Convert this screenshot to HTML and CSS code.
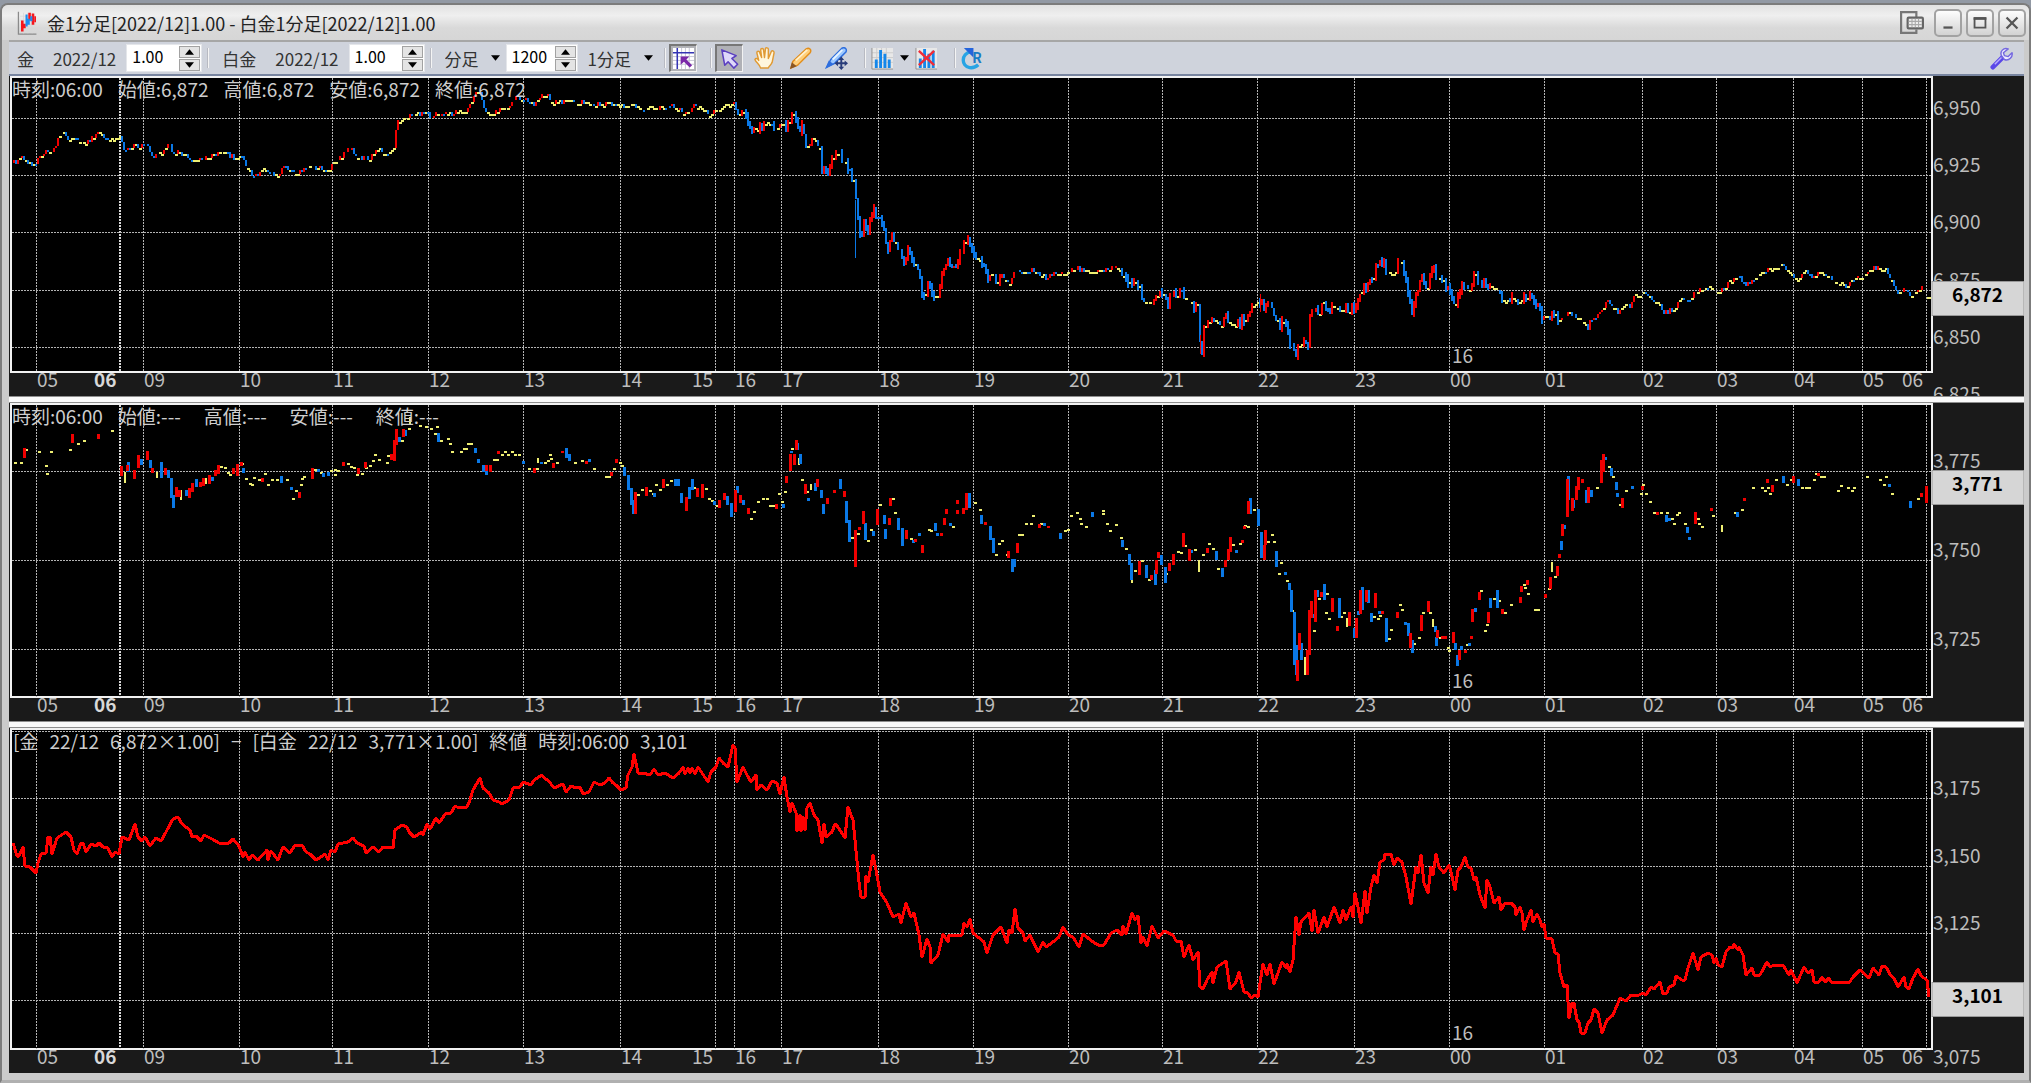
FILE: index.html
```html
<!DOCTYPE html>
<html lang="ja">
<head>
    <meta charset="UTF-8">
    <meta name="viewport" content="width=device-width, initial-scale=1.0">
    <title>金1分足[2022/12]1.00 - 白金1分足[2022/12]1.00</title>
    <link rel="stylesheet" href="styles.css">
</head>
<body>
    <div class="window">
        <header class="titlebar">
            <svg class="app-icon" viewBox="0 0 22 28">
                <path d="M1 1v26h21" fill="none" stroke="#8a8a8a" stroke-width="1.5"/>
                <path d="M3 6h18M3 11h18M3 16h18M3 21h18M7 2v24M12 2v24M17 2v24" stroke="#d8d8d8"/>
                <path d="M5.500 11v13M8 15v5M14 2v9M18 3v13" stroke="#f5151c" stroke-width="3"/>
                <path d="M10.500 4v14M13 9v7M16 6v6" stroke="#1c8cf0" stroke-width="2.500"/>
                <path d="M20.500 6v7" stroke="#f5151c" stroke-width="2"/>
            </svg>
            <h1>金1分足[2022/12]1.00 - 白金1分足[2022/12]1.00</h1>
            <div class="window-buttons">
                <button class="float-button" aria-label="分離">
                    <svg viewBox="0 0 22 22"><path d="M15 6V1H1v19h14v-3" fill="none" stroke="#777" stroke-width="2"/><rect x="7" y="6" width="14" height="10" rx="1" fill="#eee" stroke="#666" stroke-width="2"/><path d="M8 9.500h12M8 12.500h12M11 7v8M14 7v8M17 7v8" stroke="#aaa"/></svg>
                </button>
                <button aria-label="最小化"><svg viewBox="0 0 22 22"><path d="M6 16h10" stroke="#555" stroke-width="2.500"/></svg></button>
                <button aria-label="最大化"><svg viewBox="0 0 22 22"><path d="M5 6h12v10H5z" fill="none" stroke="#555" stroke-width="2"/><path d="M4 6h14" stroke="#555" stroke-width="3"/></svg></button>
                <button aria-label="閉じる"><svg viewBox="0 0 22 22"><path d="M5 5l12 12M17 5L5 17" stroke="#555" stroke-width="2.500"/></svg></button>
            </div>
        </header>

        <div class="toolbar">
            <label class="name" for="gold">金</label>
            <span class="date">2022/12</span>
            <span class="spin">
                <input id="gold" type="text" value="1.00">
                <span class="steps">
                    <button aria-label="増"><svg viewBox="0 0 10 6"><path d="M5 0l5 6H0z"/></svg></button>
                    <button aria-label="減"><svg viewBox="0 0 10 6"><path d="M0 0h10L5 6z"/></svg></button>
                </span>
            </span>
            <i class="sep"></i>
            <label class="name" for="platinum">白金</label>
            <span class="date">2022/12</span>
            <span class="spin">
                <input id="platinum" type="text" value="1.00">
                <span class="steps">
                    <button aria-label="増"><svg viewBox="0 0 10 6"><path d="M5 0l5 6H0z"/></svg></button>
                    <button aria-label="減"><svg viewBox="0 0 10 6"><path d="M0 0h10L5 6z"/></svg></button>
                </span>
            </span>
            <i class="sep"></i>
            <span class="dropdown">
                <select aria-label="足種"><option>分足</option></select>
                <svg viewBox="0 0 10 6"><path d="M0 0h10L5 6z"/></svg>
            </span>
            <span class="spin count">
                <input type="text" value="1200" aria-label="本数">
                <span class="steps">
                    <button aria-label="増"><svg viewBox="0 0 10 6"><path d="M5 0l5 6H0z"/></svg></button>
                    <button aria-label="減"><svg viewBox="0 0 10 6"><path d="M0 0h10L5 6z"/></svg></button>
                </span>
            </span>
            <span class="dropdown">
                <select aria-label="間隔"><option>1分足</option></select>
                <svg viewBox="0 0 10 6"><path d="M0 0h10L5 6z"/></svg>
            </span>
            <i class="sep"></i>
            <button class="tool pressed" aria-label="十字カーソル">
                <svg viewBox="0 0 24 24"><rect x="1" y="1" width="22" height="22" fill="#fff"/><path d="M1 10h22M1 14h22M1 18h22M10 1v22M14 1v22M18 1v22" stroke="#c4c4d4"/><path d="M1 6h22M5.500 1v22" stroke="#3434b4" stroke-width="1.600"/><path d="M9 10h9l-3 3 6 6-2.500 2.500-6-6-3.500 3z" fill="#7a28a8"/></svg>
            </button>
            <i class="sep"></i>
            <button class="tool pressed" aria-label="選択">
                <svg viewBox="0 0 24 24"><path d="M4 3l15 6-4.500 3 6 6-4 4-6-6.500L7 19z" fill="#ded8fa" stroke="#5a3fc0" stroke-width="1.600" stroke-linejoin="round"/></svg>
            </button>
            <button class="tool" aria-label="移動">
                <svg viewBox="0 0 24 24"><path d="M8 22c-1-4-5-6-6-9 1-2 3-1 4 1L4 6c0-2 3-2 3 0l2 5-1-8c0-2 3-2 3 0l1 8 1-9c0-2 3-1 3 0v10l3-7c1-2 3-1 3 1l-2 10c-1 3-3 3-4 6z" fill="#fff6dc" stroke="#e09a34" stroke-width="1.500" stroke-linejoin="round"/></svg>
            </button>
            <button class="tool" aria-label="描画">
                <svg viewBox="0 0 24 24"><path d="M2 22l2-7L18 2c3-2 6 1 4 4L9 19z" fill="#ffcf7a" stroke="#e28e1c" stroke-width="1.500"/><path d="M7 14L19 3" stroke="#fff0cc" stroke-width="2"/><path d="M1 23l2-7 5 4z" fill="#8a5624"/></svg>
            </button>
            <button class="tool" aria-label="描画編集">
                <svg viewBox="0 0 24 24"><path d="M2 21l4-8L18 1c3-1 5 1 4 4L10 17z" fill="#9cc8ff" stroke="#2e6ede" stroke-width="1.500"/><path d="M8 13L18 3" stroke="#e8f4ff" stroke-width="2"/><path d="M0 23l4-9 5 4z" fill="#2e6ede"/><path d="M17 10l3 3.500h-2v2.500h2.500v-2L24 17l-3.500 3v-2H18v2.500h2L17 24l-3-3.500h2V18h-2.500v2L10 17l3.500-3v2H16v-2.500h-2z" fill="#283c7a"/></svg>
            </button>
            <i class="sep"></i>
            <button class="tool joined" aria-label="指標">
                <svg viewBox="0 0 24 24"><rect x="1" y="1" width="22" height="22" fill="#e8e8e8"/><path d="M6 1v21M11 1v21M16 1v21M1 6h22M1 11h22M1 16h22" stroke="#ccc"/><path d="M5.500 22V13M10 22V3M14.500 22V7M19 22v-9" stroke="#1487ea" stroke-width="3"/><path d="M1 1v22h22" fill="none" stroke="#909090"/></svg>
            </button>
            <button class="more" aria-label="指標一覧"><svg viewBox="0 0 10 6"><path d="M0 0h10L5 6z"/></svg></button>
            <button class="tool" aria-label="指標削除">
                <svg viewBox="0 0 24 24"><rect x="1" y="1" width="22" height="22" fill="#e8e8e8"/><path d="M5.500 22V12M10 22V2M14.500 22V7M19 22V4" stroke="#1487ea" stroke-width="3"/><path d="M1 1v22h22" fill="none" stroke="#909090"/><path d="M4 4l16 15M20 4L4 19" stroke="#f02c38" stroke-width="2.500"/></svg>
            </button>
            <i class="sep"></i>
            <button class="tool" aria-label="再読込">
                <svg viewBox="0 0 24 24"><path d="M10 5C0 7 0 20 9 21.500c4 .5 7-1 9-3" fill="none" stroke="#28a4e4" stroke-width="3.500"/><path d="M3 1h10v10z" fill="#2464dc"/><text class="r-mark" x="12" y="17">R</text></svg>
            </button>
            <button class="tool settings" aria-label="設定">
                <svg viewBox="0 0 24 24"><path d="M3 21L13 11" stroke="#5a48e8" stroke-width="5" stroke-linecap="round"/><path d="M5 18l7-7" stroke="#b8acff" stroke-width="1.500"/><path d="M19 2c-5-2-9 3-7 7l3 4c5 2 9-3 8-7l-4 4-4-1-1-3z" fill="#eeeaff" stroke="#7468e0" stroke-width="1.500" stroke-linejoin="round"/></svg>
            </button>
        </div>

        <main class="charts">
            <section class="chart gold">
                <svg class="plot" id="plot-gold"></svg>
                <p class="legend"><span>時刻:06:00</span><span>始値:6,872</span><span>高値:6,872</span><span>安値:6,872</span><span>終値:6,872</span></p>
            </section>
            <div class="splitter"></div>
            <section class="chart platinum">
                <svg class="plot" id="plot-platinum"></svg>
                <p class="legend"><span>時刻:06:00</span><span>始値:---</span><span>高値:---</span><span>安値:---</span><span>終値:---</span></p>
            </section>
            <div class="splitter"></div>
            <section class="chart spread">
                <svg class="plot" id="plot-spread"></svg>
                <p class="legend"><span>[金</span><span>22/12</span><span>6,872×1.00]</span><span>−</span><span>[白金</span><span>22/12</span><span>3,771×1.00]</span><span>終値</span><span>時刻:06:00</span><span>3,101</span></p>
            </section>
        </main>
    </div>

    <script src="charts.js"></script>
</body>
</html>
```
FILE: styles.css
```css
* {
    box-sizing: border-box;
}

body {
    margin: 0;
    padding-top: 3px;
    height: 100vh;
    overflow: hidden;
    background: #9299a4;
    font-family: "Noto Sans CJK JP", sans-serif;
    font-size: 17px;
    color: #333;
}

button, input, select {
    font: inherit;
    color: inherit;
    margin: 0;
    padding: 0;
    border: none;
    background: none;
}

.window {
    display: flex;
    flex-direction: column;
    height: 100%;
    padding: 0 5px 7px 7px;
    border: 2px solid #7c7c7c;
    border-width: 2px 2px 3px 2px;
    border-bottom-color: #b0b0b0;
    border-radius: 8px 8px 0 0;
    background: #cbcbcb;
}

/* title */
.titlebar {
    display: flex;
    align-items: center;
    height: 35px;
    margin: 0 -5px 0 -7px;
    padding: 0 3px 0 14px;
    border-radius: 6px 6px 0 0;
    background: linear-gradient(#e2e2e2, #efefef 30%, #d9d9d9 65%, #d6d6d6);
}

.app-icon {
    width: 22px;
    height: 24px;
}

h1 {
    flex: 1;
    margin: 0 0 0 9px;
    font-size: 18px;
    font-weight: normal;
    line-height: 24px;
    color: #222;
}

.window-buttons {
    display: flex;
    gap: 4px;
}

.window-buttons button {
    width: 28px;
    height: 28px;
    padding: 2px;
    border: 2px solid #a2a2a2;
    border-radius: 5px;
    background: linear-gradient(#fdfdfd, #d2d2d2);
}

.window-buttons .float-button {
    margin-right: 4px;
    border: none;
    background: none;
}

.window-buttons svg {
    display: block;
    width: 100%;
}

/* toolbar */
.toolbar {
    display: flex;
    align-items: center;
    height: 36px;
    flex: none;
    padding-right: 9px;
    border-top: 2px solid #a6a6a6;
    border-bottom: 2px solid #7885a0;
    background: #cfd3dc;
}

.name {
    margin: 0 19px 0 10px;
}

.name:first-child {
    margin-left: 8px;
}

.date {
    margin-right: 10px;
}

.spin {
    display: flex;
    align-items: center;
    width: 76px;
    height: 28px;
    padding: 0 1px 0 5px;
    background: #fff;
    border: 1px solid #e4e6ea;
}

.spin input {
    flex: 1;
    min-width: 0;
    height: 24px;
    padding-bottom: 4px;
    font-size: 16px;
    color: #000;
}

.count {
    width: 72px;
}

.steps {
    display: flex;
    flex-direction: column;
    gap: 1px;
    width: 21px;
}

.steps button {
    display: flex;
    align-items: center;
    justify-content: center;
    height: 12px;
    border: 1px solid #a2a2a2;
    background: #e4e4e4;
}

.steps svg, .more svg, .dropdown svg {
    width: 9px;
    height: 6px;
}

.sep {
    width: 2px;
    height: 20px;
    margin: 0 3px 0 5px;
    background: #f4f4f4;
    border-left: 1px solid #b8bac2;
}

.dropdown {
    display: flex;
    align-items: center;
    margin: 0 6px 0 10px;
}

.dropdown select {
    appearance: none;
    padding-right: 22px;
}

.dropdown svg {
    margin-left: -10px;
    pointer-events: none;
}

.tool {
    display: flex;
    align-items: center;
    justify-content: center;
    width: 28px;
    height: 28px;
    margin-right: 8px;
}

.tool svg {
    width: 23px;
    height: 23px;
}

.pressed {
    border: 1px solid #f2f2f2;
    border-top: 2px solid #777;
    border-left: 2px solid #777;
    background: #b0b1b6;
}

.joined {
    margin-right: 0;
}

.more {
    width: 16px;
    height: 28px;
}

.more svg {
    display: block;
    margin: 0 auto;
}

.settings {
    margin: 0 0 0 auto;
}

.r-mark {
    font-family: Roboto, sans-serif;
    font-size: 15px;
    font-weight: bold;
    fill: #1a7cc4;
}

/* charts */
.charts {
    display: flex;
    flex-direction: column;
    flex: 1;
    min-height: 0;
}

.chart {
    position: relative;
    min-height: 0;
    background: #1a1a1a;
}

.gold {
    flex: 320 0 0;
}

.platinum {
    flex: 318 0 0;
}

.spread {
    flex: 345 0 0;
}

.splitter {
    height: 7px;
    background: #fafafa;
    border-top: 1px solid #8e8e8e;
    border-bottom: 1px solid #8e8e8e;
}

.plot {
    display: block;
    width: 100%;
    height: 100%;
    overflow: hidden;
}

.legend {
    position: absolute;
    top: 2px;
    left: 3px;
    display: flex;
    gap: 15px;
    margin: 0;
    font-size: 19px;
    line-height: 22px;
    color: #cdcdcd;
    white-space: nowrap;
}

.platinum .legend span {
    min-width: 71px;
}

.spread .legend {
    left: 4px;
    gap: 11px;
}

.frame {
    fill: #000;
    stroke: #f2f2f2;
    stroke-width: 2;
    shape-rendering: crispEdges;
}

.grid {
    stroke: #b4b4b4;
    stroke-dasharray: 2 1;
    shape-rendering: crispEdges;
}

.grid.session {
    stroke: #d8d8d8;
    stroke-width: 2;
}

.axis {
    font-size: 19px;
    fill: #bdbdbd;
}

.axis.session {
    font-weight: bold;
    fill: #d8d8d8;
}

.up {
    fill: #f00000;
}

.down {
    fill: #0a78e6;
}

.flat {
    fill: #eeee72;
}

.bars {
    shape-rendering: crispEdges;
}

.line {
    fill: none;
    stroke: #f00;
    stroke-width: 3;
    stroke-linejoin: round;
    shape-rendering: crispEdges;
}

.tag {
    fill: #d6d6d6;
    stroke: #999;
}

.tag-text {
    font-size: 19px;
    font-weight: bold;
    fill: #000;
}
```
FILE: charts.js
```js
const NS = 'http://www.w3.org/2000/svg';

// base size of a panel, everything is scaled from this
const BASE_LEFT = 9;
const BASE_WIDTH = 2015;
const PLOT_RIGHT = 1932;

// [grid x, label, label x]
const hours = [
    [37, '05'], [120, '06', 94], [144, '09'], [240, '10'], [333, '11'], [429, '12'], [524, '13'], [621, '14'],
    [716, '15', 692], [735, '16'], [782, '17'], [879, '18'], [974, '19'], [1069, '20'], [1163, '21'], [1258, '22'],
    [1355, '23'], [1450, '00'], [1545, '01'], [1643, '02'], [1717, '03'], [1794, '04'], [1863, '05'], [1927, '06', 1902]
];

const goldTrace = `13,163 22,157 26,161 33,166 37,159 45,150 51,153 57,140 62,134 69,139 78,140 85,143 91,138 98,133 107,137 112,140 119,135
122,148 126,151 135,145 138,148 145,146 153,156 161,152 168,143 172,151 181,153 192,163 201,159 210,156 225,152 232,157 241,157 246,168
254,176 263,168 276,176 283,167 290,170 296,175 304,167 312,168 328,170 333,164 344,152 350,148 357,157 370,158 376,150 386,153 393,147
396,120 400,122 408,115 417,115 424,112 431,117 435,110 440,116 446,111 452,116 455,109 464,112 470,103 475,91 479,93 484,110 489,115
498,110 507,107 513,98 525,99 533,105 541,93 551,100 556,103 568,100 580,103 600,104 621,104 627,108 629,103 638,107 643,110 658,108
670,105 679,109 685,114 693,104 702,109 709,115 717,110 725,105 733,101 736,117 745,113 751,132 756,128 765,125 774,128 782,128 789,120
792,112 796,122 799,135 801,123 805,150 811,138 819,145 821,168 826,175 830,162 836,153 842,158 847,168 853,183 855,197 856,217 860,240
863,220 866,234 872,207 875,217 881,222 887,250 892,233 899,252 902,265 906,250 910,255 917,270 920,283 922,305 927,282 932,295 937,293
941,278 948,260 951,270 959,255 967,238 972,252 980,262 987,280 990,275 996,284 1001,275 1009,285 1014,270 1024,273 1033,270 1046,278
1055,273 1068,273 1073,267 1082,270 1095,271 1117,268 1126,283 1135,282 1142,297 1149,305 1158,293 1167,302 1171,293 1180,292 1189,296
1193,308 1197,305 1199,340 1201,351 1202,333 1210,318 1220,327 1225,317 1231,327 1242,320 1248,313 1250,305 1254,308 1260,298 1264,315
1266,300 1271,308 1278,327 1284,318 1288,340 1294,355 1300,340 1307,347 1309,315 1314,308 1318,315 1323,300 1327,313 1333,303 1341,309
1354,309 1357,299 1362,287 1364,292 1373,277 1375,265 1382,260 1386,273 1394,275 1399,257 1406,287 1411,313 1415,293 1421,275 1426,290
1430,265 1435,277 1438,272 1444,285 1448,287 1451,302 1455,303 1461,285 1470,288 1474,275 1481,283 1488,288 1496,290 1503,300 1514,295
1516,303 1523,298 1530,293 1536,305 1541,318 1549,317 1551,308 1558,325 1567,312 1578,318 1587,328 1589,320 1600,313 1606,299 1617,312
1629,305 1633,298 1644,293 1654,301 1664,312 1673,310 1680,298 1688,302 1696,290 1710,285 1719,292 1728,283 1737,275 1745,285 1756,278
1765,270 1781,266 1787,272 1796,279 1804,272 1812,278 1820,273 1829,277 1845,287 1856,277 1864,277 1873,267 1886,269 1896,293 1904,288
1911,297 1917,288 1926,284`;

// single bars: x,top,bottom
const platinumUp = `24,448,458 72,434,443 98,434,439 121,466,476 127,465,471 134,470,479 138,455,468 147,451,460 152,468,473 165,468,475
176,487,497 179,490,497 189,488,498 192,483,492 200,482,487 203,478,486 209,475,484 215,470,476 218,465,474 233,468,474 237,464,476 241,462,466
262,478,482 299,492,498 312,468,479 343,462,466 358,468,474 365,462,468 391,454,460 394,440,461 396,429,445 403,429,437 486,465,471 490,465,472
498,451,454 534,468,473 553,463,468 562,451,453 586,461,464 611,472,476 616,459,463 635,492,514 646,487,496 663,479,488 686,497,511 697,488,497
702,484,498 719,500,508 724,493,500 735,490,512 740,495,503 748,508,514 776,504,509 786,476,483 790,454,471 794,454,465 796,440,450 805,484,494
817,479,487 827,498,504 834,490,493 844,491,497 855,530,567 859,527,530 863,511,524 877,509,525 889,518,525 890,498,506 906,530,539 915,539,542
922,545,553 941,533,536 944,518,525 946,509,514 957,500,504 957,510,514 963,508,514 966,493,510 985,522,525 1008,551,558 1017,543,553 1039,524,528
1048,526,528 1139,561,575 1151,575,580 1156,560,574 1158,552,558 1169,563,571 1173,554,565 1183,533,547 1189,549,561 1207,548,553 1225,560,567
1228,549,560 1230,537,552 1242,540,543 1244,526,529 1248,501,514 1264,545,560 1265,530,545 1297,660,681 1299,633,650 1307,650,675 1309,610,655
1311,601,618 1315,590,622 1321,592,597 1332,598,612 1337,626,631 1349,612,626 1356,618,638 1360,590,614 1366,590,602 1375,593,608 1382,611,614
1397,612,618 1410,633,648 1421,615,631 1428,601,612 1437,630,638 1442,636,639 1445,636,639 1453,632,643 1459,650,660 1465,650,653 1471,636,639
1472,609,622 1479,592,600 1488,612,623 1502,609,614 1520,597,603 1521,586,592 1527,580,585 1545,594,598 1550,577,589 1557,566,576 1559,554,558
1562,524,536 1567,479,517 1572,498,511 1576,486,500 1578,477,490 1582,479,483 1588,487,503 1601,460,483 1603,454,472 1622,498,508 1642,486,490
1657,512,515 1695,512,524 1711,508,511 1744,498,501 1767,479,483 1772,485,492 1793,476,483 1818,473,476 1921,493,497 1926,486,503`;

const platinumDown = `128,462,472 141,459,465 150,460,468 161,462,478 168,470,478 171,478,498 173,495,508 186,490,496 196,479,487 212,477,481
243,468,473 281,476,483 291,487,490 318,469,472 323,473,477 328,472,476 399,437,442 405,430,436 438,433,442 475,448,453 478,459,463 483,465,472
486,471,475 523,461,464 541,462,464 566,448,458 569,454,461 589,459,462 624,467,476 628,475,490 631,488,505 633,500,514 654,493,497 675,479,486
678,479,486 681,493,503 689,487,499 692,479,490 714,501,505 727,496,505 731,503,517 737,486,493 743,500,505 783,504,508 791,451,453 797,443,450
800,454,464 808,498,501 815,483,491 821,490,498 823,504,514 840,479,489 846,501,523 849,520,542 865,523,540 873,531,536 884,515,524 885,529,539
898,518,530 902,528,546 913,540,543 919,533,536 935,523,531 937,533,536 950,523,526 969,493,508 981,515,524 990,526,540 993,538,553 1012,559,572
1014,559,567 1044,523,526 1060,533,539 1092,512,517 1122,540,547 1129,554,565 1131,563,580 1146,565,578 1155,570,585 1161,555,565 1165,567,583
1191,550,553 1216,551,560 1222,568,577 1236,550,553 1250,498,514 1258,509,526 1261,532,558 1276,551,567 1285,572,575 1289,583,590 1291,590,612
1294,612,665 1296,645,675 1301,643,660 1312,614,618 1317,590,597 1324,584,600 1339,598,618 1354,628,638 1358,611,615 1362,587,610 1368,590,603
1371,613,622 1379,611,614 1386,618,642 1405,622,625 1408,623,636 1412,640,653 1435,626,632 1436,637,646 1455,643,650 1457,655,666 1461,646,650
1469,643,646 1475,608,612 1490,598,608 1497,590,608 1561,541,550 1564,525,529 1568,476,500 1573,500,508 1586,490,503 1591,490,497 1605,457,460
1611,468,476 1616,482,490 1617,493,497 1632,486,489 1666,515,522 1669,518,521 1687,527,533 1689,537,540 1737,512,517 1783,476,483 1798,479,486
1889,484,487 1910,501,508`;

const platinumFlat = `15,462 21,462 26,449 39,451 51,451 46,465 47,473 70,449 78,443 84,440 112,430 125,472,483 157,472,478 181,490,500 206,478,484
221,466 225,467 228,472 230,474 242,463 246,478 250,483 252,484 254,477 259,479 265,473 268,484 272,479 277,479 287,479 293,498 296,490 301,484
302,478 304,476 315,469 321,472 331,470 335,469 335,474 338,470 348,463 351,466 354,467 357,474 362,473 366,467 370,465 373,460 375,454 379,459
387,462 388,455 402,440 410,417,425 409,428 420,425 426,426 431,428 435,433 437,426 441,440 448,438 450,443 452,451 461,451 464,448 466,448
468,443 471,443 494,459 497,459 502,454 505,451 508,454 512,451 515,454 519,454 529,468 537,468 538,458,463 545,462 548,460 550,454 551,458
557,462 575,462 582,460 594,468 606,476 609,476 614,468 620,462 622,465 638,494 642,489 650,490 653,493 656,484 660,489 667,484 671,480 694,487
706,488 709,498 712,500 717,505 751,518 754,511 758,501 763,498 767,498 770,505 773,505 782,501 779,493 785,491 792,448 799,458,465 802,479
807,491 811,484,490 852,537 858,533 868,540 871,529 880,504 893,498 895,512 911,538 919,534 929,529 931,530 953,526 975,502 980,509 996,554
999,543 1002,540 1007,554 1019,534 1022,534 1026,523 1031,523 1033,515 1041,523 1065,530 1068,529 1071,515 1077,512 1080,518 1081,523 1086,526
1103,510 1103,513 1107,523 1110,530 1116,524 1121,537 1126,548 1132,573,583 1135,570 1142,560 1149,579 1166,573 1178,551 1181,552 1185,545
1195,549 1199,560,572 1203,554 1209,543 1213,548 1218,568 1233,544 1240,543 1245,525 1248,526 1254,509 1268,541 1272,534 1274,541 1279,573
1281,562 1287,580 1292,610 1305,657,675 1314,630 1319,598 1327,593 1326,612 1329,618 1341,616 1344,612 1347,618,627 1374,616 1378,618 1380,615
1389,638 1391,629 1400,604 1402,609 1414,643 1419,637 1423,612 1430,612 1433,619,627 1440,637 1449,650 1448,647 1467,644 1481,590 1485,630
1487,624 1494,598 1499,600 1505,612 1511,604 1524,584 1525,587 1528,593 1535,609 1538,609 1549,588 1552,562,572 1555,576 1597,487 1609,466
1613,476 1620,504 1626,490 1643,484 1641,493 1646,493 1650,501 1654,512 1661,512 1667,512 1672,518 1674,523 1677,514 1679,512 1685,523 1698,518
1699,523 1702,526 1713,515 1722,525,532 1735,512 1742,509 1753,487 1762,487 1765,490 1768,487 1770,493 1776,479 1787,484 1791,479 1802,487
1806,487 1809,487 1814,479 1816,473 1821,476 1824,476 1838,490 1841,485 1848,487 1852,490 1854,487 1867,476 1880,479 1886,476 1884,484 1892,493 1918,498`;

const spreadLine = `13,843 17,856 19,856 23,847 25,866 30,867 36,873 38,863 41,854 46,853 48,837 50,837 52,854 57,838 66,832 71,837 74,850 77,854
81,843 83,843 86,852 91,844 96,846 99,843 103,847 108,848 112,857 115,852 119,854 122,837 129,840 135,824 138,837 142,841 145,837 150,846
156,838 161,841 166,832 173,819 178,817 182,824 190,830 192,837 196,836 201,841 204,835 212,839 219,843 229,843 233,839 239,846 243,857 245,852
249,860 252,855 258,860 267,850 268,860 271,851 278,860 283,847 290,853 295,845 302,845 306,852 310,854 316,860 321,857 325,854 328,860 331,850
335,852 338,844 348,842 353,838 357,843 364,846 366,853 373,847 379,852 383,847 393,848 395,830 402,825 407,827 409,832 414,837 422,832 423,835
427,824 430,829 436,818 439,823 446,813 451,813 455,806 459,808 467,807 470,800 473,790 480,778 483,788 489,793 493,800 499,802 502,804 509,800
513,788 520,787 523,782 531,785 534,780 542,775 545,779 548,780 554,788 563,784 566,792 571,786 576,788 580,787 583,794 589,792 594,782 600,785
605,783 609,778 613,783 616,785 621,790 626,788 628,775 632,767 634,754 638,773 643,773 650,775 654,769 658,775 665,773 673,778 679,773 683,767
685,774 688,768 690,773 692,768 695,774 698,767 702,773 708,782 711,772 716,767 719,758 724,764 728,767 733,745 735,748 737,782 743,767 747,775
751,782 756,775 757,790 761,785 767,790 772,781 777,783 780,794 784,777 787,797 790,812 792,803 796,813 797,831 800,815 801,831 803,817 805,830
807,808 810,803 814,815 818,820 822,843 824,824 826,837 832,832 835,824 838,827 845,838 848,807 853,820 855,840 859,882 861,897 865,897 866,876
868,882 873,855 876,870 880,892 887,903 893,917 899,914 901,923 906,903 911,917 914,913 919,935 922,957 927,939 930,947 931,963 938,955 943,934
948,942 949,935 962,935 964,923 967,927 970,919 973,933 984,942 987,953 993,935 1001,927 1007,943 1009,930 1012,933 1015,909 1018,928 1023,933
1025,941 1030,935 1038,952 1043,942 1046,947 1053,942 1059,937 1063,927 1068,935 1073,937 1079,947 1083,934 1093,942 1100,946 1104,945 1111,933
1117,930 1122,935 1123,926 1126,934 1132,913 1135,920 1138,916 1141,943 1143,937 1147,946 1152,926 1158,938 1164,931 1173,935 1176,941 1181,941
1184,957 1189,945 1193,960 1198,952 1200,987 1203,989 1207,980 1212,972 1213,983 1217,967 1226,961 1230,989 1236,982 1239,972 1244,992 1248,993
1251,998 1255,995 1258,997 1260,983 1263,964 1267,975 1270,964 1274,984 1282,962 1286,968 1287,964 1290,972 1293,960 1296,917 1299,935 1301,922
1309,913 1312,931 1314,910 1318,933 1324,917 1327,927 1334,907 1340,923 1343,910 1346,920 1351,907 1353,917 1355,893 1358,907 1361,923 1365,891
1367,913 1371,887 1374,875 1377,883 1380,862 1384,860 1385,854 1391,854 1394,865 1397,858 1402,862 1406,877 1411,904 1416,867 1418,873 1421,855
1424,883 1428,893 1431,867 1433,875 1436,854 1439,867 1444,873 1449,865 1451,872 1455,890 1458,870 1461,867 1465,857 1468,867 1471,868 1474,880
1476,877 1480,895 1485,908 1487,880 1490,887 1494,903 1499,897 1501,910 1505,903 1511,903 1515,907 1516,915 1520,907 1522,913 1524,930 1527,920
1531,910 1533,922 1537,914 1540,920 1542,927 1544,924 1546,938 1552,939 1555,953 1558,954 1560,973 1564,987 1567,985 1569,1018 1572,1003
1574,1003 1577,1020 1579,1022 1581,1033 1585,1033 1588,1023 1591,1020 1594,1009 1598,1013 1602,1033 1607,1020 1613,1015 1620,998 1626,1001
1631,995 1637,996 1643,993 1646,995 1651,987 1654,989 1660,982 1663,994 1667,993 1669,987 1674,985 1676,976 1682,980 1685,980 1688,968 1693,953
1698,970 1701,957 1708,953 1712,955 1714,963 1716,958 1718,965 1722,967 1726,952 1730,947 1733,948 1734,944 1738,950 1739,947 1743,955 1746,975
1752,968 1754,975 1760,975 1767,962 1770,967 1774,965 1783,965 1789,975 1791,970 1797,983 1804,967 1808,973 1812,970 1814,982 1819,982 1822,977
1825,982 1829,978 1831,982 1849,983 1853,977 1860,970 1869,978 1873,968 1879,975 1882,966 1886,967 1891,976 1894,978 1898,987 1904,977 1906,987
1909,989 1913,978 1918,969 1921,976 1927,980 1929,997`;

const charts = [
    {
        id: 'plot-gold', top: 76, height: 320, last: '6,872', tag: 281,
        prices: [['6,950', 119], ['6,925', 176], ['6,900', 233], ['6,875', 291], ['6,850', 348], ['6,825', 405]],
        draw: drawGold
    },
    {
        id: 'plot-platinum', top: 403, height: 318, last: '3,771', tag: 470,
        prices: [['3,775', 472], ['3,750', 561], ['3,725', 650]],
        draw: drawPlatinum
    },
    {
        // the 3,100 label is left out, the last price tag sits on it
        id: 'plot-spread', top: 728, height: 345, last: '3,101', tag: 982,
        prices: [['', 732], ['3,175', 799], ['3,150', 867], ['3,125', 934], ['', 1001], ['3,075', 1068]],
        draw: drawSpread
    }
];

function add(parent, name, attrs, text) {
    const el = document.createElementNS(NS, name);
    for (const key in attrs) el.setAttribute(key, attrs[key]);
    if (text) el.textContent = text;
    parent.appendChild(el);
    return el;
}

function parse(list) {
    return list.trim().split(/\s+/).map(p => p.split(',').map(Number));
}

function bar(g, s, cls, x, y1, y2, w) {
    add(g, 'rect', { class: cls, x: s.x(x), y: s.y(y1), width: w, height: Math.max(2, s.y(y2) - s.y(y1)) });
}

function drawGold(svg, s) {
    const g = add(svg, 'g', { class: 'bars' });
    const pts = parse(goldTrace);
    let seed = 7;
    let prev = pts[0][1];
    let i = 0;
    const random = () => {
        seed = (seed * 16807) % 2147483647;
        return seed / 2147483647;
    };
    for (let x = 13; x < 1926; x += 2) {
        while (i < pts.length - 2 && pts[i + 1][0] <= x) i++;
        const [x1, y1] = pts[i];
        const [x2, y2] = pts[i + 1];
        // evening session moves more than the day and the late night
        const busy = (x > 736 && x < 1000) || (x > 1120 && x < 1560);
        const noise = (random() - 0.5) * (busy ? 8 : 5);
        const y = Math.round((y1 + (y2 - y1) * (x - x1) / (x2 - x1) + noise) / 2) * 2;
        const diff = y - prev;
        const wick = busy ? Math.round(random() * 4) : 0;
        if (Math.abs(diff) <= 2 && random() < 0.75) {
            if (random() < 0.8) bar(g, s, 'flat', x, y, y + 2, 3);
        } else {
            bar(g, s, diff < 0 ? 'up' : 'down', x, Math.min(y, prev) - wick, Math.max(y, prev) + wick, 2);
        }
        prev = y;
    }
    // spikes
    bar(g, s, 'down', 855, 200, 258, 1);
    bar(g, s, 'up', 1200, 335, 354, 1);
    bar(g, s, 'up', 1260, 294, 312, 1);
    bar(g, s, 'flat', 1927, 297, 299, 4);
}

function drawPlatinum(svg, s) {
    const g = add(svg, 'g', { class: 'bars' });
    parse(platinumFlat).forEach(([x, y, y2]) => bar(g, s, 'flat', x - 1, y, y2 || y + 2, y2 ? 2 : 3));
    parse(platinumDown).forEach(([x, y1, y2]) => bar(g, s, 'down', x - 1, y1, y2, 3));
    parse(platinumUp).forEach(([x, y1, y2]) => bar(g, s, 'up', x - 1, y1, y2, 3));
}

function drawSpread(svg, s) {
    const points = parse(spreadLine).map(([x, y]) => s.x(x) + ',' + s.y(y)).join(' ');
    add(svg, 'polyline', { class: 'line', points });
}

function render(chart) {
    const svg = document.getElementById(chart.id);
    const width = svg.clientWidth;
    const height = svg.clientHeight;
    const s = {
        x: v => (v - BASE_LEFT) * width / BASE_WIDTH,
        y: v => (v - chart.top) * height / chart.height
    };
    const right = s.x(PLOT_RIGHT);
    const bottom = height - 24;
    svg.replaceChildren();

    add(svg, 'rect', { class: 'frame', x: 2, y: 1, width: right - 2, height: bottom - 1 });

    hours.forEach(([x, label, labelX], n) => {
        const gx = Math.round(s.x(x)) + (n === 1 ? 0 : -0.5);
        const extra = n === 1 ? ' session' : '';
        add(svg, 'line', { class: 'grid' + extra, x1: gx, x2: gx, y1: 2, y2: bottom });
        add(svg, 'text', { class: 'axis' + extra, x: s.x(labelX || x), y: bottom + 15 }, label);
    });
    chart.prices.forEach(([label, y]) => {
        const gy = Math.round(s.y(y)) - 0.5;
        if (gy < bottom) add(svg, 'line', { class: 'grid', x1: 3, x2: right - 1, y1: gy, y2: gy });
        add(svg, 'text', { class: 'axis', x: right + 1, y: gy - 4 }, label);
    });
    add(svg, 'text', { class: 'axis', x: s.x(1452), y: bottom - 9 }, '16');

    chart.draw(svg, s);

    const ty = s.y(chart.tag);
    add(svg, 'rect', { class: 'tag', x: right, y: ty + 0.5, width: width - right, height: 34 });
    add(svg, 'text', { class: 'tag-text', x: right + 20, y: ty + 21 }, chart.last);
}

function renderAll() {
    charts.forEach(render);
}

renderAll();
window.addEventListener('resize', renderAll);
```
